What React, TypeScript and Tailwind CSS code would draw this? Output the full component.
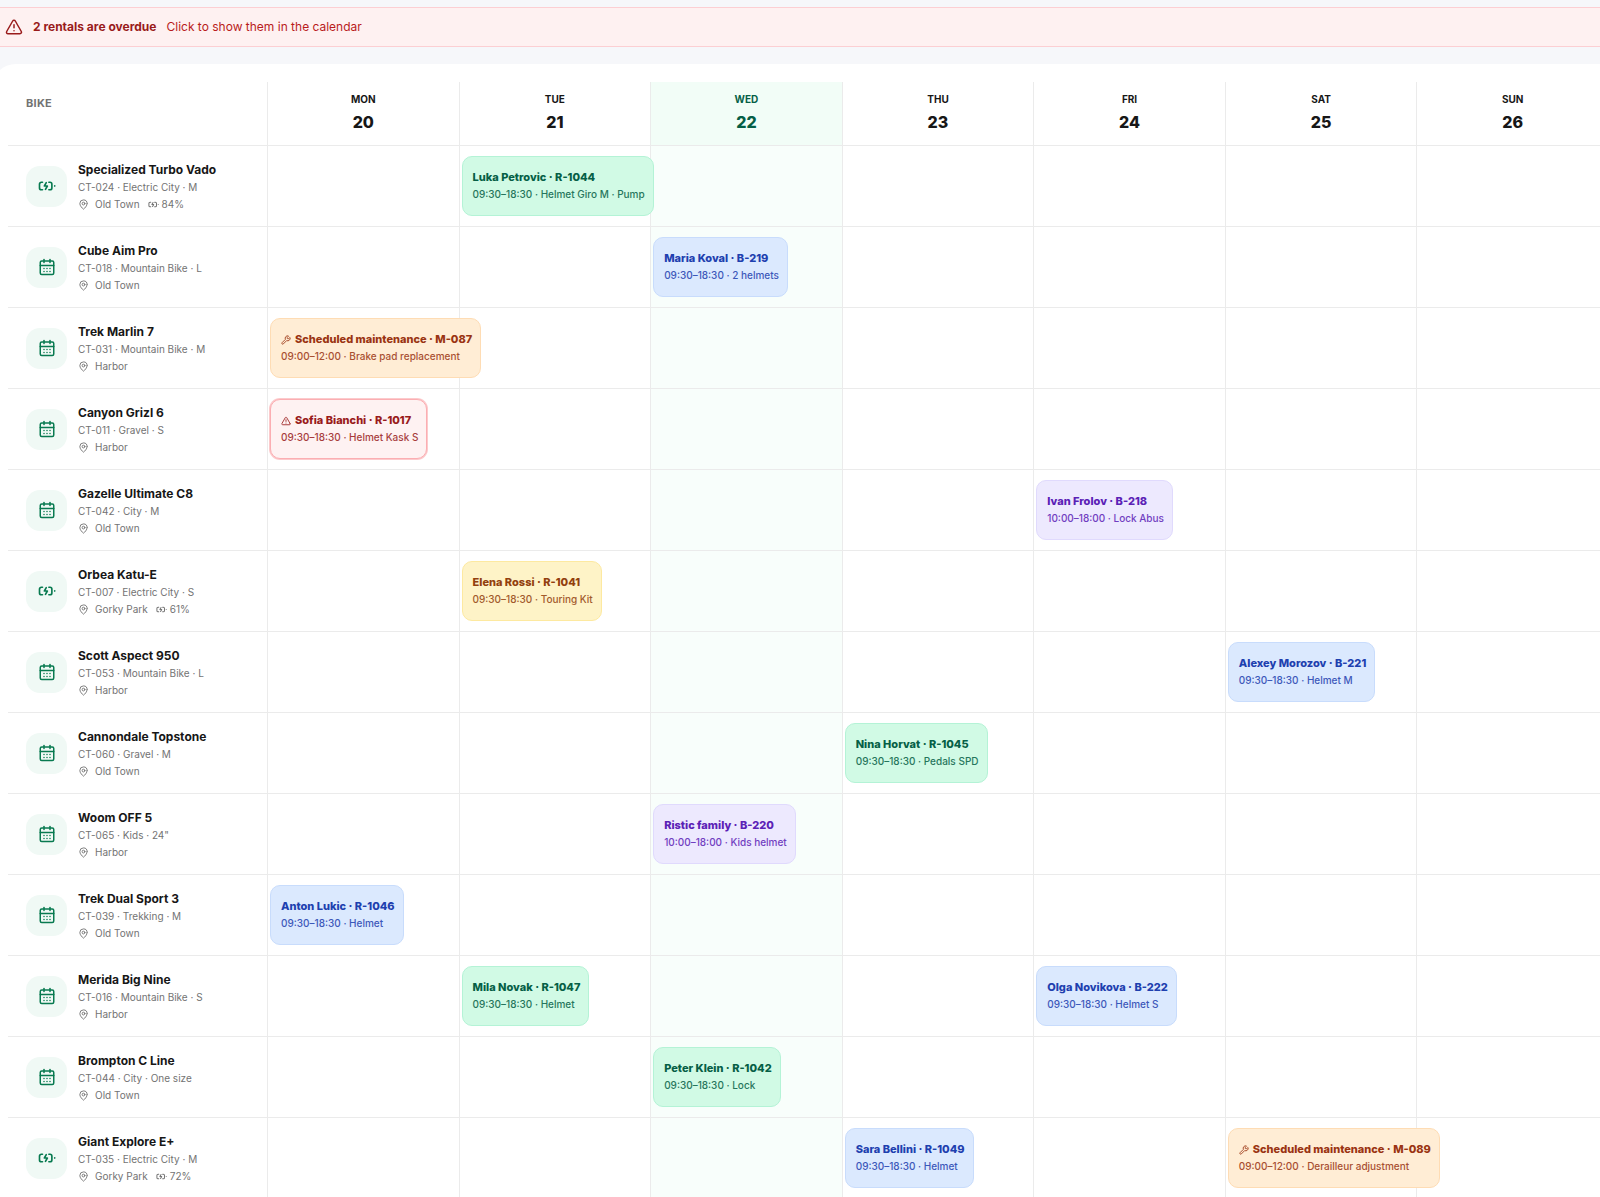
import React from "react";
import { CalendarDays, MapPin, TriangleAlert, Wrench } from "lucide-react";

type Tone = "green" | "blue" | "orange" | "red" | "purple" | "yellow";

interface Booking {
  day: number;
  tone: Tone;
  title: string;
  detail: string;
}

interface Bike {
  name: string;
  meta: string;
  place: string;
  battery?: string;
  bookings: Booking[];
}

const tones: Record<Tone, string> = {
  green: "bg-[#d1fae5] border-[#b4f3d6] text-[#065f46]",
  blue: "bg-[#dbe9fe] border-[#c8dcfc] text-[#1e40af]",
  orange: "bg-[#ffedd5] border-[#fedcb4] text-[#9a3412]",
  red: "bg-[#fef2f2] border-[#fbaeb2] text-[#991b1b] ring-1 ring-[#fccacc]",
  purple: "bg-[#ede9fe] border-[#e0dafd] text-[#5b21b6]",
  yellow: "bg-[#fef3c7] border-[#fde9a0] text-[#92400e]",
};

const days = [
  { name: "Mon", date: 20 },
  { name: "Tue", date: 21 },
  { name: "Wed", date: 22 },
  { name: "Thu", date: 23 },
  { name: "Fri", date: 24 },
  { name: "Sat", date: 25 },
  { name: "Sun", date: 26 },
];

const today = 22;

const bikes: Bike[] = [
  { name: "Specialized Turbo Vado", meta: "CT-024 · Electric City · M", place: "Old Town", battery: "84%", bookings: [{ day: 21, tone: "green", title: "Luka Petrovic · R-1044", detail: "09:30–18:30 · Helmet Giro M · Pump" }] },
  { name: "Cube Aim Pro", meta: "CT-018 · Mountain Bike · L", place: "Old Town", bookings: [{ day: 22, tone: "blue", title: "Maria Koval · B-219", detail: "09:30–18:30 · 2 helmets" }] },
  { name: "Trek Marlin 7", meta: "CT-031 · Mountain Bike · M", place: "Harbor", bookings: [{ day: 20, tone: "orange", title: "Scheduled maintenance · M-087", detail: "09:00–12:00 · Brake pad replacement" }] },
  { name: "Canyon Grizl 6", meta: "CT-011 · Gravel · S", place: "Harbor", bookings: [{ day: 20, tone: "red", title: "Sofia Bianchi · R-1017", detail: "09:30–18:30 · Helmet Kask S" }] },
  { name: "Gazelle Ultimate C8", meta: "CT-042 · City · M", place: "Old Town", bookings: [{ day: 24, tone: "purple", title: "Ivan Frolov · B-218", detail: "10:00–18:00 · Lock Abus" }] },
  { name: "Orbea Katu-E", meta: "CT-007 · Electric City · S", place: "Gorky Park", battery: "61%", bookings: [{ day: 21, tone: "yellow", title: "Elena Rossi · R-1041", detail: "09:30–18:30 · Touring Kit" }] },
  { name: "Scott Aspect 950", meta: "CT-053 · Mountain Bike · L", place: "Harbor", bookings: [{ day: 25, tone: "blue", title: "Alexey Morozov · B-221", detail: "09:30–18:30 · Helmet M" }] },
  { name: "Cannondale Topstone", meta: "CT-060 · Gravel · M", place: "Old Town", bookings: [{ day: 23, tone: "green", title: "Nina Horvat · R-1045", detail: "09:30–18:30 · Pedals SPD" }] },
  { name: "Woom OFF 5", meta: "CT-065 · Kids · 24\"", place: "Harbor", bookings: [{ day: 22, tone: "purple", title: "Ristic family · B-220", detail: "10:00–18:00 · Kids helmet" }] },
  { name: "Trek Dual Sport 3", meta: "CT-039 · Trekking · M", place: "Old Town", bookings: [{ day: 20, tone: "blue", title: "Anton Lukic · R-1046", detail: "09:30–18:30 · Helmet" }] },
  { name: "Merida Big Nine", meta: "CT-016 · Mountain Bike · S", place: "Harbor", bookings: [{ day: 21, tone: "green", title: "Mila Novak · R-1047", detail: "09:30–18:30 · Helmet" }, { day: 24, tone: "blue", title: "Olga Novikova · B-222", detail: "09:30–18:30 · Helmet S" }] },
  { name: "Brompton C Line", meta: "CT-044 · City · One size", place: "Old Town", bookings: [{ day: 22, tone: "green", title: "Peter Klein · R-1042", detail: "09:30–18:30 · Lock" }] },
  { name: "Giant Explore E+", meta: "CT-035 · Electric City · M", place: "Gorky Park", battery: "72%", bookings: [{ day: 23, tone: "blue", title: "Sara Bellini · R-1049", detail: "09:30–18:30 · Helmet" }, { day: 25, tone: "orange", title: "Scheduled maintenance · M-089", detail: "09:00–12:00 · Derailleur adjustment" }] },
];

function BatteryIcon({ size, className }: { size: number; className?: string }) {
  return (
    <svg
      width={size}
      height={size}
      viewBox="0 0 24 24"
      fill="none"
      stroke="currentColor"
      strokeWidth="2.2"
      strokeLinecap="round"
      strokeLinejoin="round"
      className={className}
      aria-hidden="true"
    >
      <path d="M6 7H4.5A2.5 2.5 0 0 0 2 9.5v5A2.5 2.5 0 0 0 4.5 17H6" />
      <path d="M14.5 7H16a2.5 2.5 0 0 1 2.5 2.5v5A2.5 2.5 0 0 1 16 17h-1.5" />
      <path d="m11 7.5-2.500 4.500h4l-2.500 4.500" />
      <path d="M22.300 11.900v.2" />
    </svg>
  );
}

function OverdueBanner() {
  return (
    <button
      type="button"
      className="flex h-10 w-full items-center border-y border-[#fccfd3] bg-[#fef1f1] pl-[5px] text-left text-xs text-[#b91c1c]"
    >
      <TriangleAlert size={18} className="mr-[10px] text-[#991b1b]" />
      <span className="mr-[10px] font-bold text-[#991b1b]">2 rentals are overdue</span>
      <span>Click to show them in the calendar</span>
    </button>
  );
}

function BookingCard({ booking }: { booking: Booking }) {
  return (
    <button
      type="button"
      className={`relative z-10 ml-[2px] flex h-[60px] w-max flex-col justify-center rounded-[10px] border pr-2 pl-[10px] text-left whitespace-nowrap ${tones[booking.tone]}`}
    >
      <span className="flex h-[17px] items-center gap-1 text-[11px] font-extrabold">
        {booking.tone === "orange" && <Wrench size={10} />}
        {booking.tone === "red" && <TriangleAlert size={10} />}
        {booking.title}
      </span>
      <span className="h-[17px] text-[10px] leading-[17px] font-medium opacity-85">{booking.detail}</span>
    </button>
  );
}

function BikeCell({ bike }: { bike: Bike }) {
  return (
    <div className="flex items-center gap-[11px] pl-[18px]">
      <span className="flex size-[41px] shrink-0 items-center justify-center rounded-[14px] bg-[#f0f9f5] text-[#087a50]">
        {bike.battery ? <BatteryIcon size={18} /> : <CalendarDays size={18} />}
      </span>
      <div className="pt-px text-[10px] leading-[17px] font-normal text-[#737373]">
        <div className="text-xs leading-[18px] font-bold text-[#171717]">{bike.name}</div>
        <div>{bike.meta}</div>
        <div className="flex items-center">
          <MapPin size={11} className="mr-[6px]" />
          {bike.place}
          {bike.battery && (
            <>
              <BatteryIcon size={11} className="mr-[3px] ml-2" />
              {bike.battery}
            </>
          )}
        </div>
      </div>
    </div>
  );
}

export default function App() {
  return (
    <div className="min-h-screen overflow-x-hidden bg-[#f6f7fa] pt-[7px] font-['Inter',sans-serif] text-[#171717]">
      <OverdueBanner />
      <main className="mt-[17px] -mr-2 -ml-2 rounded-tl-3xl bg-white pt-[18px] pl-4">
        <table className="w-full table-fixed border-separate border-spacing-0">
          <thead>
            <tr>
              <th scope="col" className="h-[64px] w-[259px] border-b border-[#ebebeb] pb-[20px] pl-[18px] text-left text-[11px] font-bold tracking-wide text-[#737373]">
                BIKE
              </th>
              {days.map((day) => (
                <th
                  key={day.date}
                  scope="col"
                  className={`border-b border-l border-[#ebebeb] pb-[2px] text-center ${day.date === today ? "bg-[#f2fdf7] text-[#065f46]" : ""}`}
                >
                  <div className="text-[10px] leading-4 font-bold uppercase">{day.name}</div>
                  <div className="mt-[3px] text-base leading-6 font-extrabold">{day.date}</div>
                </th>
              ))}
            </tr>
          </thead>
          <tbody>
            {bikes.map((bike) => (
              <tr key={bike.name} className="h-[81px]">
                <th scope="row" className="border-b border-[#ebebeb] text-left">
                  <BikeCell bike={bike} />
                </th>
                {days.map((day) => (
                  <td
                    key={day.date}
                    className={`border-b border-l border-[#ebebeb] ${day.date === today ? "bg-[#f8fefb]" : ""}`}
                  >
                    {bike.bookings
                      .filter((booking) => booking.day === day.date)
                      .map((booking) => (
                        <BookingCard key={booking.title} booking={booking} />
                      ))}
                  </td>
                ))}
              </tr>
            ))}
          </tbody>
        </table>
      </main>
    </div>
  );
}
